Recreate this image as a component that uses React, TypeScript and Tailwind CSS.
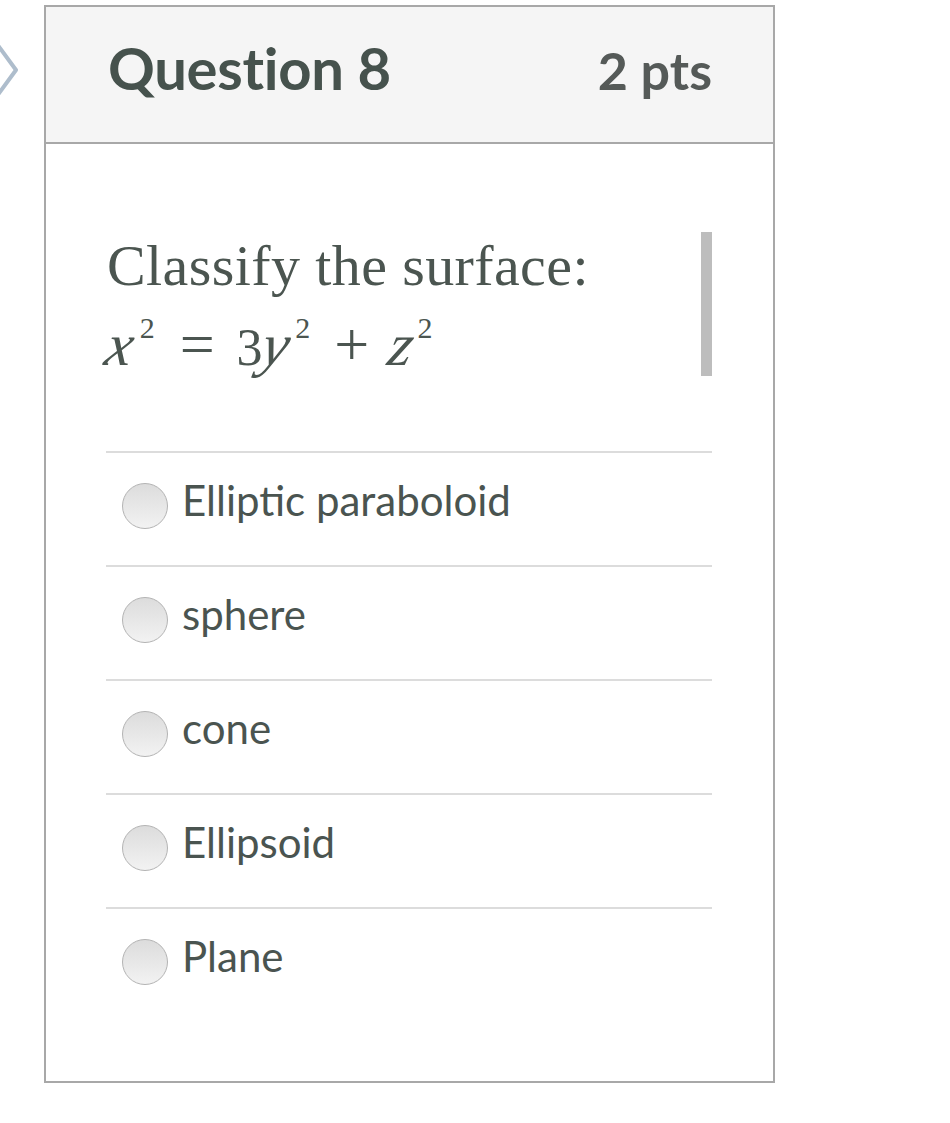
import React from "react";

const answers = ["Elliptic paraboloid", "sphere", "cone", "Ellipsoid", "Plane"];

function Radio() {
  return (
    <span className="block w-[46px] h-[46px] shrink-0 rounded-full border border-[#b3b3b3] bg-gradient-to-b from-[#dcdcdc] to-[#f2f2f2]" />
  );
}

function Sup({ children, className = "" }: { children: React.ReactNode; className?: string }) {
  return <span className={`text-[30px] not-italic align-[27px] leading-none ${className}`}>{children}</span>;
}

// math variable: slanted letter
function V({ children, className = "" }: { children: React.ReactNode; className?: string }) {
  return <span className={`inline-block text-[60px] italic -skew-x-12 ${className}`}>{children}</span>;
}

export default function App() {
  return (
    <div className="relative w-[950px] h-[1123px] bg-white" style={{ fontFamily: "Lato, 'Open Sans', sans-serif" }}>
      {/* side chevron */}
      <svg className="absolute left-0 top-[40px]" width="22" height="60" viewBox="0 0 22 60">
        <polyline points="-3,4 16,30 -3,56" fill="none" stroke="#aebdcc" strokeWidth="4" strokeLinejoin="round" strokeLinecap="round" />
      </svg>

      <div className="absolute left-[44px] top-[5px] w-[731px] h-[1078px] border-2 border-[#a8a8a8] flex flex-col">
        {/* header */}
        <div className="h-[137px] shrink-0 bg-[#f5f5f5] border-b-2 border-[#a8a8a8] flex items-center pl-[62px] pr-[61px] pb-[14px]">
          <div className="flex w-full items-baseline justify-between">
            <h2 className="text-[58px] font-bold text-[#46524d] leading-none tracking-[-0.3px]">Question 8</h2>
            <span className="text-[52px] font-bold text-[#555a58] leading-none">2 pts</span>
          </div>
        </div>

        {/* body */}
        <div className="flex-1 pt-[88px] px-[61px]">
          <div className="flex justify-between">
            <div className="text-[#4b5550]" style={{ fontFamily: "'Liberation Serif', 'DejaVu Serif', serif" }}>
              <p className="text-[58px] leading-[80px] mt-[-6px] tracking-[0.4px]">Classify the surface:</p>
              <p className="text-[52px] leading-[80px] mt-[-2px] whitespace-nowrap">
                <V>x</V>
                <Sup className="ml-[6px]">2</Sup>
                <span className="text-[62px] ml-[25px]">=</span>
                <span className="ml-[22px]">3</span>
                <V>y</V>
                <Sup className="ml-[6px]">2</Sup>
                <span className="text-[62px] ml-[24px]">+</span>
                <V className="ml-[21px]">z</V>
                <Sup className="ml-[4px]">2</Sup>
              </p>
            </div>
            <div className="w-[11px] h-[144px] bg-[#bdbdbd]" />
          </div>

          <ul className="mt-[63px] -ml-[1px]">
            {answers.map((a) => (
              <li key={a} className="h-[114px] border-t-2 border-[#dcdcdc] flex items-center pl-[16px] pb-[6px] gap-[14px]">
                <Radio />
                <span className="text-[42px] text-[#4a5450] leading-none mb-[12px]">{a}</span>
              </li>
            ))}
          </ul>
        </div>
      </div>
    </div>
  );
}
